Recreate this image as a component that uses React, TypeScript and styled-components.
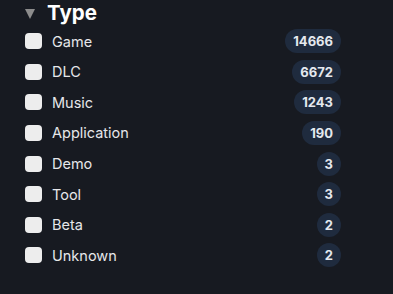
import React from 'react';
import styled, { createGlobalStyle } from 'styled-components';

const GlobalStyle = createGlobalStyle`
  html, body {
    margin: 0;
    padding: 0;
    background: #171a21;
  }
  body {
    font-family: Inter, 'Noto Sans', sans-serif;
    color: #e8eaed;
  }
`;

const Panel = styled.section`
  width: 393px;
  height: 294px;
  box-sizing: border-box;
  padding: 0 52px 0 25px;
  background: #171a21;
`;

const Header = styled.div`
  display: flex;
  align-items: center;
  height: 26px;
  gap: 12px;
`;

const Caret = styled.span`
  width: 0;
  height: 0;
  border-left: 5.5px solid transparent;
  border-right: 5.5px solid transparent;
  border-top: 10px solid #8c8c8c;
  margin-top: 1px;
`;

const Title = styled.h2`
  margin: 0;
  font-size: 20.5px;
  font-weight: 700;
  line-height: 26px;
  color: #ffffff;
`;

const List = styled.ul`
  list-style: none;
  margin: 0;
  padding: 0;
`;

const Row = styled.li`
  display: flex;
  align-items: center;
  height: 30.57px;
`;

const Box = styled.span`
  width: 17px;
  height: 16px;
  border-radius: 4px;
  background: #ededed;
  flex-shrink: 0;
`;

const Label = styled.span`
  margin-left: 10px;
  flex: 1;
  font-size: 14.5px;
  color: #e6e7ea;
`;

const Count = styled.span`
  min-width: 22px;
  height: 24px;
  box-sizing: border-box;
  padding: 0 8px;
  border-radius: 12px;
  background: #1f2b3e;
  display: flex;
  align-items: center;
  justify-content: center;
  font-size: 13px;
  font-weight: 700;
  color: #e4e8ee;
`;

const types: [string, number][] = [
  ['Game', 14666],
  ['DLC', 6672],
  ['Music', 1243],
  ['Application', 190],
  ['Demo', 3],
  ['Tool', 3],
  ['Beta', 2],
  ['Unknown', 2],
];

export default function App() {
  return (
    <>
      <GlobalStyle />
      <Panel>
        <Header>
          <Caret />
          <Title>Type</Title>
        </Header>
        <List>
          {types.map(([name, count]) => (
            <Row key={name}>
              <Box />
              <Label>{name}</Label>
              <Count>{count}</Count>
            </Row>
          ))}
        </List>
      </Panel>
    </>
  );
}
